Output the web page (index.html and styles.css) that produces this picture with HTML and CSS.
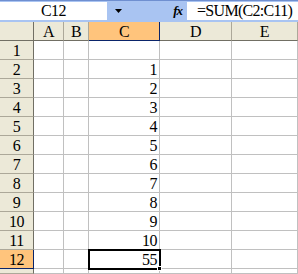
FILE: index.html
```html
<!DOCTYPE html>
<html>
<head>
<meta charset="utf-8">
<link rel="stylesheet" href="styles.css">
</head>
<body>
<div class="app">
  <div class="fbar">
    <div class="namebox">C12</div>
    <div class="dd"><svg width="7" height="4" viewBox="0 0 7 4"><path d="M0 0H7L3.5 4Z" fill="#000"/></svg></div>
    <div class="fx">fx</div>
    <div class="formula">=SUM(C2:C11)</div>
  </div>
  <div class="grid">
    <div class="ch corner"></div>
    <div class="ch">A</div>
    <div class="ch">B</div>
    <div class="ch sel">C</div>
    <div class="ch">D</div>
    <div class="ch">E</div>

    <div class="rh">1</div><div class="c"></div><div class="c"></div><div class="c n"></div><div class="c"></div><div class="c"></div>
    <div class="rh">2</div><div class="c"></div><div class="c"></div><div class="c n">1</div><div class="c"></div><div class="c"></div>
    <div class="rh">3</div><div class="c"></div><div class="c"></div><div class="c n">2</div><div class="c"></div><div class="c"></div>
    <div class="rh">4</div><div class="c"></div><div class="c"></div><div class="c n">3</div><div class="c"></div><div class="c"></div>
    <div class="rh">5</div><div class="c"></div><div class="c"></div><div class="c n">4</div><div class="c"></div><div class="c"></div>
    <div class="rh">6</div><div class="c"></div><div class="c"></div><div class="c n">5</div><div class="c"></div><div class="c"></div>
    <div class="rh">7</div><div class="c"></div><div class="c"></div><div class="c n">6</div><div class="c"></div><div class="c"></div>
    <div class="rh">8</div><div class="c"></div><div class="c"></div><div class="c n">7</div><div class="c"></div><div class="c"></div>
    <div class="rh">9</div><div class="c"></div><div class="c"></div><div class="c n">8</div><div class="c"></div><div class="c"></div>
    <div class="rh">10</div><div class="c"></div><div class="c"></div><div class="c n">9</div><div class="c"></div><div class="c"></div>
    <div class="rh">11</div><div class="c"></div><div class="c"></div><div class="c n">10</div><div class="c"></div><div class="c"></div>
    <div class="rh sel">12</div><div class="c"></div><div class="c"></div><div class="c n active">55<span class="handle"></span></div><div class="c"></div><div class="c"></div>
    <div class="rh"></div><div class="c"></div><div class="c"></div><div class="c"></div><div class="c"></div><div class="c"></div>
  </div>
</div>
</body>
</html>
```

FILE: styles.css
```css
* { box-sizing: border-box; }
html, body { margin: 0; padding: 0; background: #fff; }
body {
  width: 298px;
  height: 274px;
  overflow: hidden;
  font-family: "Liberation Serif", serif;
  font-size: 16px;
  letter-spacing: -0.5px;
  color: #000;
}
.app { display: flex; flex-direction: column; }
.fbar {
  height: 22px;
  background: #a9c4f2;
  border-top: 1px solid #6f8fd0;
  display: flex;
  align-items: flex-start;
  padding-top: 1px;
}
.namebox {
  width: 107px;
  height: 18px;
  background: #fff;
  text-align: center;
  line-height: 18px;
}
.dd {
  width: 20px;
  height: 18px;
  display: flex;
  align-items: center;
  justify-content: center;
  padding-left: 2px;
}
.fx {
  width: 60px;
  height: 18px;
  text-align: right;
  padding-right: 5px;
  font-style: italic;
  font-weight: bold;
  font-size: 13px;
  letter-spacing: -1px;
  line-height: 18px;
}
.formula {
  flex: 1;
  height: 18px;
  background: #fff;
  padding-left: 10px;
  line-height: 18px;
  letter-spacing: -0.7px;
}
.grid {
  display: grid;
  grid-template-columns: 34px 30px 25px 71px 72px 1fr;
  grid-template-rows: 19px repeat(12, 19px) 5px;
}
.ch {
  background: #ece9d8;
  border-right: 1px solid #aca899;
  border-bottom: 1px solid #716f64;
  text-align: center;
  line-height: 19px;
}
.ch.corner { border-right: 1px solid #716f64; }
.ch.sel {
  background: #ffc47c;
  border-right: 1px solid #0a246a;
  border-bottom: 1px solid #0a246a;
}
.rh {
  background: #ece9d8;
  border-right: 1px solid #716f64;
  border-bottom: 1px solid #aca899;
  text-align: center;
  line-height: 19px;
}
.rh.sel {
  background: #ffc47c;
  border-right: 1px solid #0a246a;
  border-bottom: 1px solid #0a246a;
}
.c {
  border-right: 1px solid #c0c0c0;
  border-bottom: 1px solid #c0c0c0;
  line-height: 19px;
}
.n { text-align: right; padding-right: 2px; }
.active {
  position: relative;
  outline: 2px solid #000;
  outline-offset: -1px;
  z-index: 1;
}
.handle {
  position: absolute;
  right: -3px;
  bottom: -3px;
  width: 5px;
  height: 5px;
  background: #000;
  border: 1px solid #fff;
}
```
